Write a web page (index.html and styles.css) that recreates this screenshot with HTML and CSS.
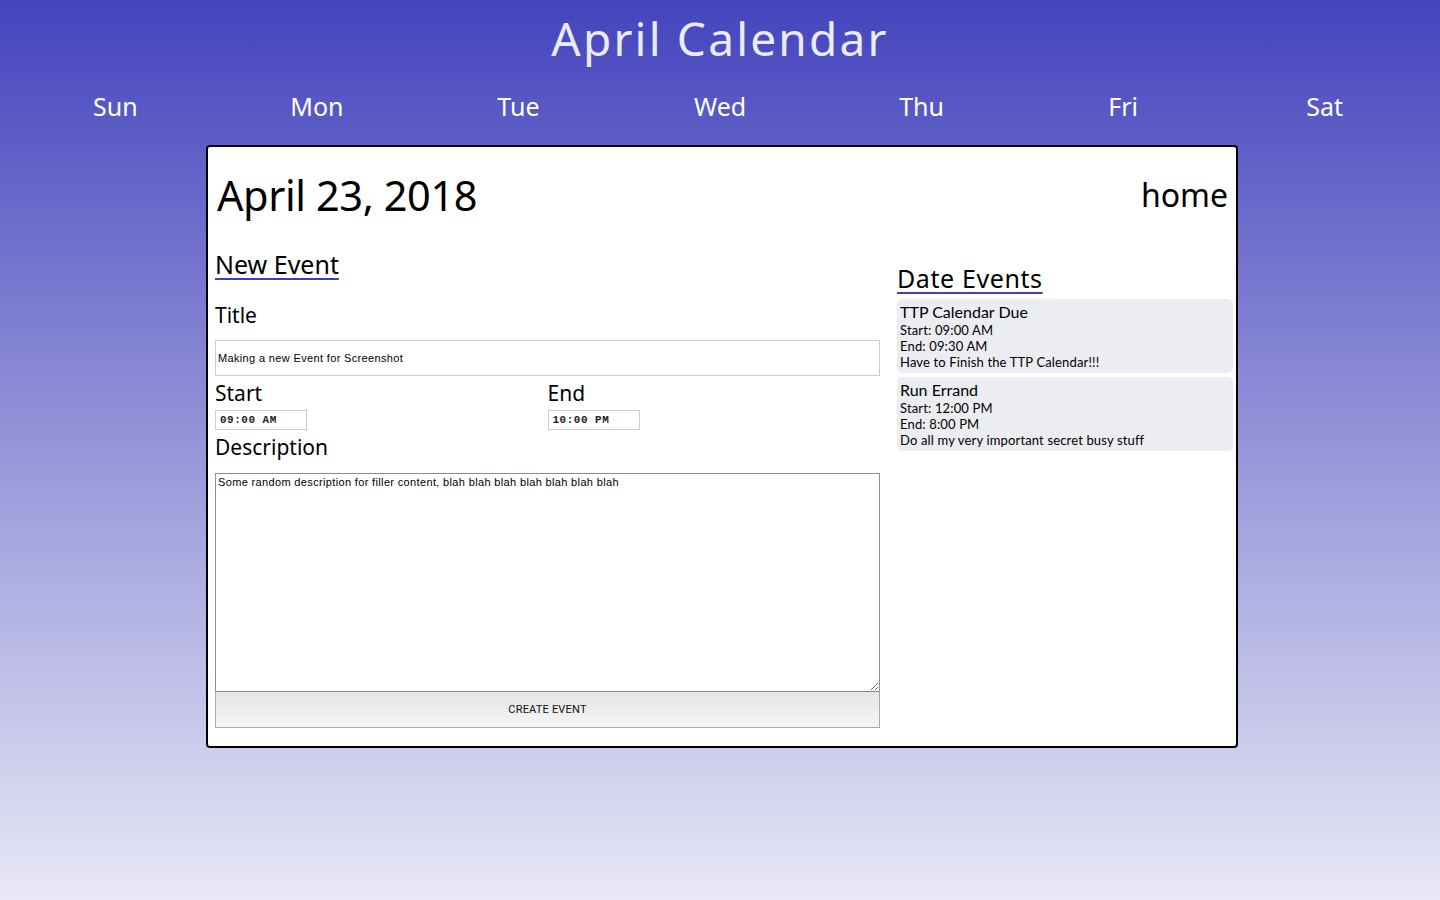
FILE: index.html
```html
<!DOCTYPE html>
<html>
<head>
<meta charset="utf-8">
<title>April Calendar</title>
<link rel="stylesheet" href="styles.css">
</head>
<body>
<h1 class="page-title">April Calendar</h1>
<div class="weekdays">
  <div class="weekday">Sun</div>
  <div class="weekday">Mon</div>
  <div class="weekday">Tue</div>
  <div class="weekday">Wed</div>
  <div class="weekday">Thu</div>
  <div class="weekday">Fri</div>
  <div class="weekday">Sat</div>
</div>
<div class="card">
  <div class="card-header">
    <div class="date-title">April 23, 2018</div>
    <div class="home">home</div>
  </div>
  <div class="columns">
    <form class="new-event">
      <div class="section-title">New Event</div>
      <label class="field-label label-title">Title</label>
      <input class="text-input" type="text" value="Making a new Event for Screenshot">
      <div class="time-row">
        <div class="time-col">
          <label class="field-label">Start</label>
          <div class="time-input">09:00 AM</div>
        </div>
        <div class="time-col">
          <label class="field-label">End</label>
          <div class="time-input">10:00 PM</div>
        </div>
      </div>
      <label class="field-label label-desc">Description</label>
      <textarea class="desc-input">Some random description for filler content, blah blah blah blah blah blah blah</textarea>
      <button class="create-btn" type="button">CREATE EVENT</button>
    </form>
    <div class="date-events">
      <div class="section-title events-title">Date Events</div>
      <div class="event">
        <div class="event-name">TTP Calendar Due</div>
        <div class="event-line">Start: 09:00 AM</div>
        <div class="event-line">End: 09:30 AM</div>
        <div class="event-line">Have to Finish the TTP Calendar!!!</div>
      </div>
      <div class="event">
        <div class="event-name">Run Errand</div>
        <div class="event-line">Start: 12:00 PM</div>
        <div class="event-line">End: 8:00 PM</div>
        <div class="event-line">Do all my very important secret busy stuff</div>
      </div>
    </div>
  </div>
</div>
</body>
</html>
```
FILE: styles.css
```css
html, body {
  margin: 0;
  padding: 0;
}
body {
  min-height: 900px;
  background: linear-gradient(to bottom, #4444be 0%, #e8e8f6 100%);
  font-family: "Noto Sans", sans-serif;
}
.page-title {
  margin: 0;
  padding-top: 6px;
  height: 74px;
  text-align: center;
  font-size: 46px;
  font-weight: 400;
  letter-spacing: 2.2px;
  color: #ebebfa;
  line-height: 64px;
}
.weekdays {
  width: 1411px;
  margin: 0 auto;
  display: grid;
  grid-template-columns: repeat(7, 1fr);
  height: 65px;
  align-items: start;
}
.weekday {
  text-align: center;
  color: #ffffff;
  font-size: 25px;
  line-height: 52px;
}
.card {
  box-sizing: border-box;
  width: 1032px;
  margin: 0 0 0 206px;
  background: #fff;
  border: 2px solid #000;
  border-radius: 4px;
  padding: 10px 3px 18px 7px;
}
.card-header {
  display: flex;
  justify-content: space-between;
  align-items: center;
  height: 80px;
  padding-right: 5px;
}
.date-title {
  font-size: 41.5px;
  letter-spacing: -0.4px;
  padding-left: 2px;
  margin-top: -4px;
  color: #000;
}
.home {
  font-size: 32px;
  color: #000;
  margin-top: -5px;
}
.columns {
  display: grid;
  grid-template-columns: 665px 1fr;
  column-gap: 17px;
  padding-top: 12px;
}
.new-event {
  display: flex;
  flex-direction: column;
  margin: 0;
}
.section-title {
  font-size: 25px;
  line-height: 30px;
  color: #000;
  align-self: flex-start;
  text-decoration: underline;
  text-decoration-color: #3f3fbd;
  text-decoration-thickness: 2px;
  text-underline-offset: 4px;
}
.field-label {
  font-size: 21px;
  line-height: 28px;
  color: #000;
}
.label-title {
  margin-top: 22px;
}
.text-input {
  box-sizing: border-box;
  width: 665px;
  height: 36px;
  margin-top: 11px;
  border: 1px solid #cccccc;
  padding: 0 2px;
  font-family: "Liberation Sans", Arial, sans-serif;
  font-size: 11px;
  letter-spacing: 0.35px;
  color: #000;
  outline: none;
}
.time-row {
  display: grid;
  grid-template-columns: 1fr 1fr;
  margin-top: 3px;
}
.time-col {
  display: flex;
  flex-direction: column;
}
.time-input {
  box-sizing: border-box;
  width: 92px;
  height: 20px;
  border: 1px solid #cccccc;
  margin-top: 3px;
  padding-left: 4px;
  font-family: "Liberation Mono", "Courier New", monospace;
  font-size: 11px;
  font-weight: 700;
  line-height: 18px;
  letter-spacing: 0.5px;
  color: #222;
  white-space: pre;
}
.label-desc {
  margin-top: 3px;
}
.desc-input {
  box-sizing: border-box;
  width: 665px;
  height: 219px;
  margin-top: 12px;
  border: 1px solid #8e8e8e;
  padding: 2px 2px;
  font-family: "Liberation Sans", Arial, sans-serif;
  font-size: 11px;
  letter-spacing: 0.35px;
  color: #000;
  resize: vertical;
  outline: none;
  display: block;
}
.create-btn {
  box-sizing: border-box;
  width: 665px;
  height: 37px;
  margin-top: -1px;
  border: 1px solid #aaaaaa;
  border-top-color: #888;
  background: linear-gradient(to bottom, #e5e5e5, #f5f5f5);
  font-family: Roboto, "Liberation Sans", sans-serif;
  font-size: 11px;
  color: #111;
  letter-spacing: 0.2px;
}
.date-events {
  display: flex;
  flex-direction: column;
  padding-top: 14px;
}
.events-title {
  letter-spacing: 0.6px;
  margin-bottom: 6px;
}
.event {
  background: #ebedf0;
  border-radius: 5px;
  padding: 3px;
  margin-bottom: 4px;
  font-family: Lato, sans-serif;
  color: #000;
}
.event-name {
  font-size: 16px;
  line-height: 20px;
}
.event-line {
  font-size: 13px;
  line-height: 16px;
  letter-spacing: 0.15px;
}
```
